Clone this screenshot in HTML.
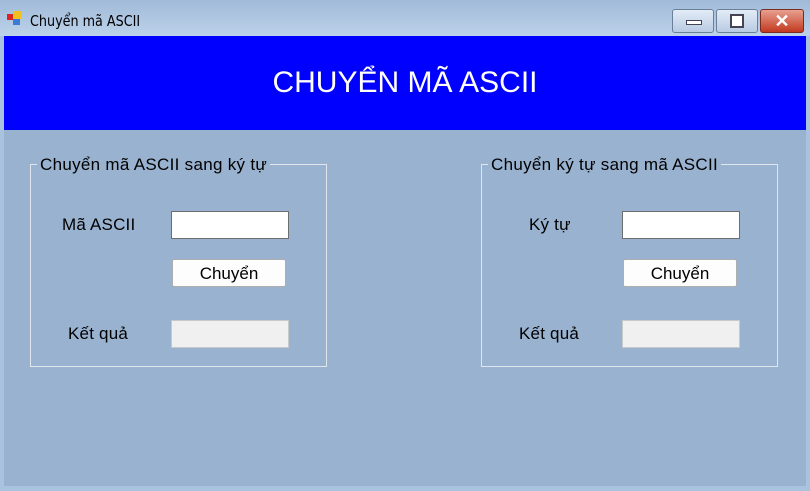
<!DOCTYPE html><html><head><meta charset="utf-8"><style>
body{margin:0;width:810px;height:491px;background:#a9c2df;position:relative;overflow:hidden;font-family:"Liberation Sans",sans-serif}
.tb{position:absolute;left:0;top:0;width:810px;height:36px;background:linear-gradient(#a0bad8,#bcd2ea)}
.cl{position:absolute;left:4px;top:36px;width:802px;height:450px;background:#98b2cf}
.hd{position:absolute;left:4px;top:36px;width:802px;height:94px;background:#0000ff;color:#fff;font-size:30px;text-align:center;line-height:94px}
.a{position:absolute}
.g{position:absolute;border:1px solid #dfe6ee;width:295px;height:201px;top:164px}
.lg{position:absolute;top:155px;background:#98b2cf;font-size:17px;padding:0 3px;color:#000;letter-spacing:.3px}
.t{position:absolute;font-size:17px;color:#000;letter-spacing:.2px}
.in{position:absolute;width:116px;height:26px;border:1px solid #6e6e6e;background:#fff}
.ro{position:absolute;width:116px;height:26px;border:1px solid #c8c8c8;background:#f0f0f0}
.bt{position:absolute;width:112px;height:26px;border:1px solid #adadad;border-radius:2px;background:#fdfdfd;font-size:17px;text-align:center;line-height:28px}
.wb{position:absolute;top:9px;height:22px;border:1px solid #6c7f99;border-radius:3px;background:linear-gradient(#e3ecf6,#b8cbe2)}
</style></head><body>
<div class="tb"></div>
<div class="a" style="left:7px;top:14px;width:6px;height:6px;background:#d22"></div>
<div class="a" style="left:13px;top:11px;width:8px;height:8px;background:#f0c020"></div>
<div class="a" style="left:13px;top:19px;width:7px;height:6px;background:#3a7bd5"></div>
<div class="a" style="left:30px;top:12px;font-size:15px;font-family:'DejaVu Sans',sans-serif;transform:scaleX(.85);transform-origin:left">Chuyển mã ASCII</div>
<div class="wb" style="left:672px;width:40px"><div class="a" style="left:13px;top:10px;width:14px;height:3px;background:#fff;border:1px solid #445"></div></div>
<div class="wb" style="left:716px;width:40px"><div class="a" style="left:13px;top:4px;width:10px;height:10px;border:2px solid #445;background:#fff"></div></div>
<div class="wb" style="left:760px;width:42px;background:linear-gradient(#e8a090,#c23a20);border-color:#7a2a1e;color:#fff;font-size:18px;font-weight:bold;text-align:center;line-height:22px">✕</div>
<div class="cl"></div>
<div class="hd">CHUYỂN MÃ ASCII</div>
<div class="g" style="left:30px"></div>
<div class="lg" style="left:37px">Chuyển mã ASCII sang ký tự</div>
<div class="t" style="left:62px;top:215px">Mã ASCII</div>
<div class="in" style="left:171px;top:211px"></div>
<div class="bt" style="left:172px;top:259px">Chuyển</div>
<div class="t" style="left:68px;top:324px">Kết quả</div>
<div class="ro" style="left:171px;top:320px"></div>
<div class="g" style="left:481px"></div>
<div class="lg" style="left:488px">Chuyển ký tự sang mã ASCII</div>
<div class="t" style="left:529px;top:215px">Ký tự</div>
<div class="in" style="left:622px;top:211px"></div>
<div class="bt" style="left:623px;top:259px">Chuyển</div>
<div class="t" style="left:519px;top:324px">Kết quả</div>
<div class="ro" style="left:622px;top:320px"></div>
</body></html>
